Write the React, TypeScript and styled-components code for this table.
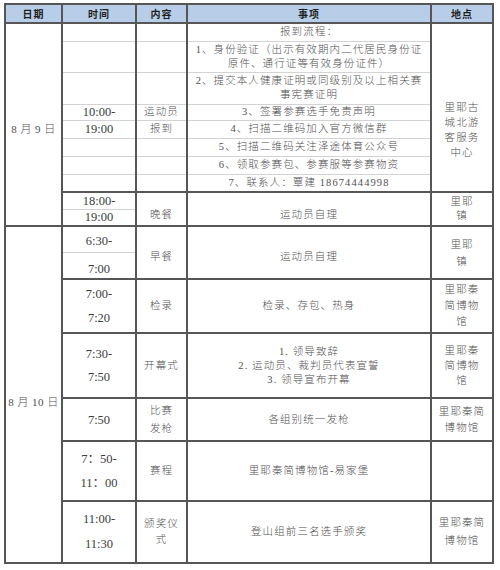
import styled, { createGlobalStyle } from 'styled-components'

const line = '#565656'
const faint = '#d3d3d3'

const GlobalStyle = createGlobalStyle`
  body {
    margin: 0;
    background: #fff;
  }
`

const Page = styled.div`
  padding: 3px 0 0 4px;
`

const Schedule = styled.table`
  border-collapse: collapse;
  table-layout: fixed;
  width: 488px;
  border: 2px solid ${line};
  font-family: 'Liberation Serif', 'Noto Sans CJK SC', serif;
  font-weight: 300;
  color: #505050;
`

const HeadCell = styled.th`
  height: 17px;
  padding: 0;
  background: #b8cee8;
  border: 2px solid ${line};
  font-family: 'Noto Sans CJK SC', sans-serif;
  font-size: 10px;
  font-weight: 700;
  letter-spacing: 1px;
  line-height: 14px;
  color: #1e1e1e;
`

const Row = styled.tr<{ $h: number; $split?: boolean }>`
  height: ${(p) => p.$h}px;
  & > td {
    border-top: ${(p) => (p.$split ? `1px solid ${faint}` : `2px solid ${line}`)};
  }
`

const Cell = styled.td<{ $lead?: number; $drop?: number }>`
  padding: ${(p) => p.$drop ?? 0}px 1px 0;
  text-align: center;
  vertical-align: middle;
  border-left: 2px solid ${line};
  border-right: 2px solid ${line};
  border-bottom: 1px solid ${faint};
  font-size: 10.5px;
  letter-spacing: 1.1px;
  line-height: ${(p) => p.$lead ?? 14}px;
  white-space: nowrap;
`

const DateCell = styled(Cell)`
  font-size: 11px;
  letter-spacing: 0.5px;
`

const TimeCell = styled(Cell)`
  font-size: 12.5px;
  font-weight: 400;
  letter-spacing: 0;
  color: #3c3c3c;
`

const TopicCell = styled(Cell)``

const ItemCell = styled(Cell)``

const PlaceCell = styled(Cell)``

export default function App() {
  return (
    <Page>
      <GlobalStyle />
      <Schedule>
        <colgroup>
          <col style={{ width: 57 }} />
          <col style={{ width: 74 }} />
          <col style={{ width: 51 }} />
          <col style={{ width: 244 }} />
          <col style={{ width: 62 }} />
        </colgroup>
        <thead>
          <tr>
            <HeadCell>日期</HeadCell>
            <HeadCell>时间</HeadCell>
            <HeadCell>内容</HeadCell>
            <HeadCell>事项</HeadCell>
            <HeadCell>地点</HeadCell>
          </tr>
        </thead>
        <tbody>
          {/* 8月9日 报到 */}
          <Row $h={18}>
            <DateCell rowSpan={10} $drop={8}>8 月 9 日</DateCell>
            <TimeCell />
            <TopicCell />
            <ItemCell>报到流程：</ItemCell>
            <PlaceCell rowSpan={8} $lead={15} $drop={44}>
              里耶古
              <br />
              城北游
              <br />
              客服务
              <br />
              中心
            </PlaceCell>
          </Row>
          <Row $h={31} $split>
            <TimeCell />
            <TopicCell />
            <ItemCell>
              1、身份验证（出示有效期内二代居民身份证
              <br />
              原件、通行证等有效身份证件）
            </ItemCell>
          </Row>
          <Row $h={32} $split>
            <TimeCell />
            <TopicCell />
            <ItemCell>
              2、提交本人健康证明或同级别及以上相关赛
              <br />
              事宪赛证明
            </ItemCell>
          </Row>
          <Row $h={16} $split>
            <TimeCell>10:00-</TimeCell>
            <TopicCell>运动员</TopicCell>
            <ItemCell>3、签署参赛选手免责声明</ItemCell>
          </Row>
          <Row $h={18} $split>
            <TimeCell>19:00</TimeCell>
            <TopicCell>报到</TopicCell>
            <ItemCell>4、扫描二维码加入官方微信群</ItemCell>
          </Row>
          <Row $h={18} $split>
            <TimeCell />
            <TopicCell />
            <ItemCell>5、扫描二维码关注泽途体育公众号</ItemCell>
          </Row>
          <Row $h={18} $split>
            <TimeCell />
            <TopicCell />
            <ItemCell>6、领取参赛包、参赛服等参赛物资</ItemCell>
          </Row>
          <Row $h={18} $split>
            <TimeCell />
            <TopicCell />
            <ItemCell>7、联系人：覃建 18674444998</ItemCell>
          </Row>

          {/* 晚餐 */}
          <Row $h={17}>
            <TimeCell>18:00-</TimeCell>
            <TopicCell rowSpan={2} $drop={12}>晚餐</TopicCell>
            <ItemCell rowSpan={2} $drop={12}>运动员自理</ItemCell>
            <PlaceCell rowSpan={2}>
              里耶
              <br />
              镇
            </PlaceCell>
          </Row>
          <Row $h={17} $split>
            <TimeCell>19:00</TimeCell>
          </Row>

          {/* 8月10日 */}
          <Row $h={26}>
            <DateCell rowSpan={7} $drop={14}>8 月 10 日</DateCell>
            <TimeCell $drop={4}>6:30-</TimeCell>
            <TopicCell rowSpan={2} $drop={8}>早餐</TopicCell>
            <ItemCell rowSpan={2} $drop={8}>运动员自理</ItemCell>
            <PlaceCell rowSpan={2} $lead={17}>
              里耶
              <br />
              镇
            </PlaceCell>
          </Row>
          <Row $h={27} $split>
            <TimeCell $drop={8}>7:00</TimeCell>
          </Row>
          <Row $h={54}>
            <TimeCell $lead={24}>
              7:00-
              <br />
              7:20
            </TimeCell>
            <TopicCell>检录</TopicCell>
            <ItemCell>检录、存包、热身</ItemCell>
            <PlaceCell $lead={16}>
              里耶秦
              <br />
              简博物
              <br />
              馆
            </PlaceCell>
          </Row>
          <Row $h={65}>
            <TimeCell $lead={23}>
              7:30-
              <br />
              7:50
            </TimeCell>
            <TopicCell>开幕式</TopicCell>
            <ItemCell>
              1. 领导致辞
              <br />
              2. 运动员、裁判员代表宣誓
              <br />
              3. 领导宣布开幕
            </ItemCell>
            <PlaceCell $lead={15}>
              里耶秦
              <br />
              简博物
              <br />
              馆
            </PlaceCell>
          </Row>
          <Row $h={43}>
            <TimeCell>7:50</TimeCell>
            <TopicCell $lead={18}>
              比赛
              <br />
              发枪
            </TopicCell>
            <ItemCell>各组别统一发枪</ItemCell>
            <PlaceCell $lead={16}>
              里耶秦简
              <br />
              博物馆
            </PlaceCell>
          </Row>
          <Row $h={60}>
            <TimeCell $lead={24}>
              7：50-
              <br />
              11：00
            </TimeCell>
            <TopicCell>赛程</TopicCell>
            <ItemCell>里耶秦简博物馆-易家堡</ItemCell>
            <PlaceCell />
          </Row>
          <Row $h={62}>
            <TimeCell $lead={25}>
              11:00-
              <br />
              11:30
            </TimeCell>
            <TopicCell $lead={16}>
              颁奖仪
              <br />
              式
            </TopicCell>
            <ItemCell>登山组前三名选手颁奖</ItemCell>
            <PlaceCell $lead={18}>
              里耶秦简
              <br />
              博物馆
            </PlaceCell>
          </Row>
        </tbody>
      </Schedule>
    </Page>
  )
}
